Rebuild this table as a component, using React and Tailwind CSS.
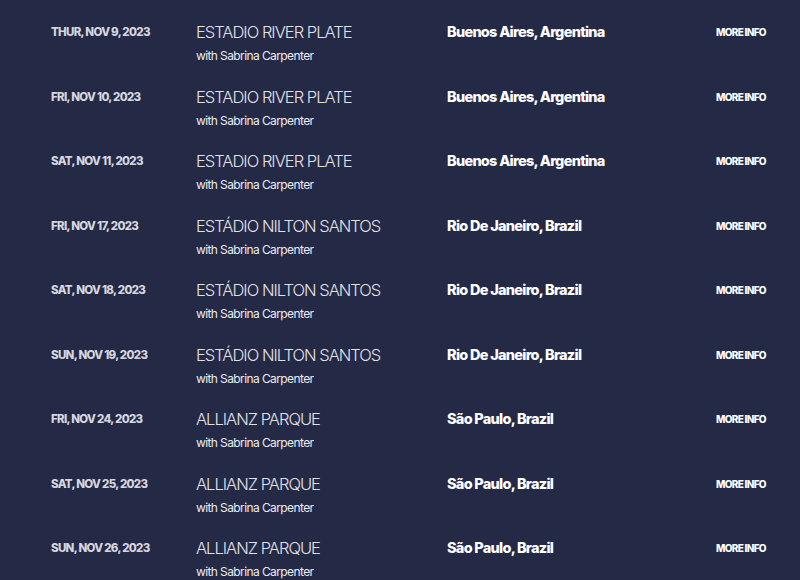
import React from "react";

const rows = [
  ["THUR, NOV 9, 2023", "ESTADIO RIVER PLATE", "Buenos Aires, Argentina"],
  ["FRI, NOV 10, 2023", "ESTADIO RIVER PLATE", "Buenos Aires, Argentina"],
  ["SAT, NOV 11, 2023", "ESTADIO RIVER PLATE", "Buenos Aires, Argentina"],
  ["FRI, NOV 17, 2023", "ESTÁDIO NILTON SANTOS", "Rio De Janeiro, Brazil"],
  ["SAT, NOV 18, 2023", "ESTÁDIO NILTON SANTOS", "Rio De Janeiro, Brazil"],
  ["SUN, NOV 19, 2023", "ESTÁDIO NILTON SANTOS", "Rio De Janeiro, Brazil"],
  ["FRI, NOV 24, 2023", "ALLIANZ PARQUE", "São Paulo, Brazil"],
  ["SAT, NOV 25, 2023", "ALLIANZ PARQUE", "São Paulo, Brazil"],
  ["SUN, NOV 26, 2023", "ALLIANZ PARQUE", "São Paulo, Brazil"],
];

export default function App() {
  return (
    <div
      className="w-[800px] h-[580px] overflow-hidden bg-[#242946] pt-[20px]"
      style={{ fontFamily: "Inter, 'Liberation Sans', sans-serif" }}
    >
      {rows.map(([date, venue, city], i) => (
        <div key={i} className="flex h-[64.5px] pl-[51px]">
          <div className="w-[145px] text-[11.5px] leading-[24px] font-extrabold tracking-[-0.06em] text-[#d6d6de]">
            {date}
          </div>
          <div className="w-[251px]">
            <div className="text-[16.5px] leading-[24px] font-light tracking-[-0.06em] text-[#e2e2e6]">
              {venue}
            </div>
            <div className="text-[12px] leading-[24px] tracking-[-0.05em] text-[#ececf0]">
              with Sabrina Carpenter
            </div>
          </div>
          <div className="w-[269px] text-[14.5px] leading-[24px] font-extrabold tracking-[-0.05em] text-white">
            {city}
          </div>
          <div className="text-[10px] leading-[24px] font-extrabold tracking-[-0.07em] text-white">
            MORE INFO
          </div>
        </div>
      ))}
    </div>
  );
}
